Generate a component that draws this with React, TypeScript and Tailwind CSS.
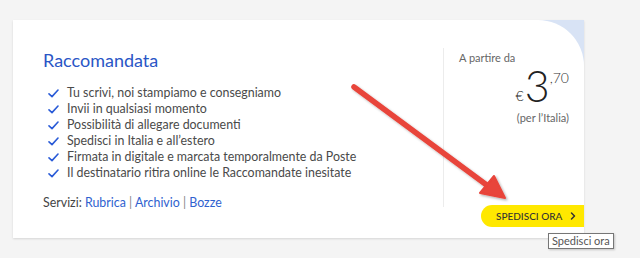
import { ChevronRight } from 'lucide-react'

const features = [
  'Tu scrivi, noi stampiamo e consegniamo',
  'Invii in qualsiasi momento',
  'Possibilità di allegare documenti',
  'Spedisci in Italia e all’estero',
  'Firmata in digitale e marcata temporalmente da Poste',
  'Il destinatario ritira online le Raccomandate inesitate',
]

function Check() {
  return (
    <svg width="11" height="9" viewBox="0 0 11 9" className="shrink-0">
      <path d="M1 4.8 L4 7.6 L10 1" fill="none" stroke="#2a5bd7" strokeWidth="1.6" strokeLinecap="round" strokeLinejoin="round" />
    </svg>
  )
}

export default function App() {
  return (
    <div
      className="relative w-[640px] h-[258px] bg-[#f4f4f4] pt-[20px] pl-[13px] overflow-hidden"
      style={{ fontFamily: 'Lato, "Noto Sans", sans-serif' }}
    >
      {/* card */}
      <div className="relative w-[571px] h-[218px] bg-white shadow-[0_1px_2px_rgba(0,0,0,0.12)] overflow-hidden">
        <div className="absolute top-0 right-0 w-[48px] h-[48px] bg-[#d8e3f5]" />
        <div className="relative h-full bg-white rounded-tr-[46px] flex flex-col pt-[28px]">
          <div className="flex h-[159px]">
            <div className="flex-1 pl-[30px]">
              <h2 className="text-[18px] leading-[24px] text-[#2a56c6]">Raccomandata</h2>
              <ul className="mt-[13px] text-[12.4px] leading-[16px] text-[#4a4a4a]">
                {features.map((f) => (
                  <li key={f} className="flex items-center gap-[8px] pl-[5px]">
                    <Check />
                    <span>{f}</span>
                  </li>
                ))}
              </ul>
              <p className="mt-[14px] text-[12.4px] leading-[16px] text-[#444]">
                Servizi: <span className="text-[#2f62cf]">Rubrica</span>{' '}
                <span className="text-[#888]">|</span>{' '}
                <span className="text-[#2f62cf]">Archivio</span>{' '}
                <span className="text-[#888]">|</span>{' '}
                <span className="text-[#2f62cf]">Bozze</span>
              </p>
            </div>
            <div className="w-[141px] border-l border-[#ececec] pl-[15px] pr-[15px] pt-[3px]">
              <p className="text-[11px] leading-[14px] text-[#666]">A partire da</p>
              <div className="flex justify-end items-start mt-[2px] text-[#222] font-light">
                <span className="self-end text-[14px] leading-[14px] mb-[2px] mr-[1px]">€</span>
                <span className="text-[43px] leading-[38px]">3</span>
                <span className="mt-[4px] text-[14px] leading-[14px] text-[#333]">,70</span>
              </div>
              <p className="mt-[6px] text-right text-[11px] leading-[14px] text-[#666]">(per l’Italia)</p>
            </div>
          </div>
          <div className="flex justify-end mt-[-2px]">
            <button className="flex items-center whitespace-nowrap gap-[5px] h-[22px] w-[103px] pl-[15px] bg-[#ffe800] rounded-l-full text-[10px] font-medium text-[#333]">
              SPEDISCI ORA
              <ChevronRight className="w-[12px] h-[12px] shrink-0" strokeWidth={3} />
            </button>
          </div>
        </div>
      </div>

      {/* annotation arrow */}
      <svg className="absolute left-0 top-0" width="640" height="258" viewBox="0 0 640 258">
        <defs>
          <filter id="sh" x="-20%" y="-20%" width="140%" height="140%">
            <feDropShadow dx="1.5" dy="1.5" stdDeviation="1.2" floodColor="#000" floodOpacity="0.3" />
          </filter>
        </defs>
        <g filter="url(#sh)" fill="#e8443a" stroke="#e8443a">
          <line x1="354" y1="87" x2="488" y2="186" strokeWidth="5.5" strokeLinecap="round" />
          <polygon points="505,198 480,193 494,176" strokeWidth="2" strokeLinejoin="round" />
        </g>
      </svg>

      {/* tooltip */}
      <div className="absolute left-[548px] top-[233px] h-[16px] px-[3px] bg-white border border-[#767676] shadow-[1px_1px_2px_rgba(0,0,0,0.2)] text-[11px] leading-[14px] text-[#555]">
        Spedisci ora
      </div>
    </div>
  )
}
